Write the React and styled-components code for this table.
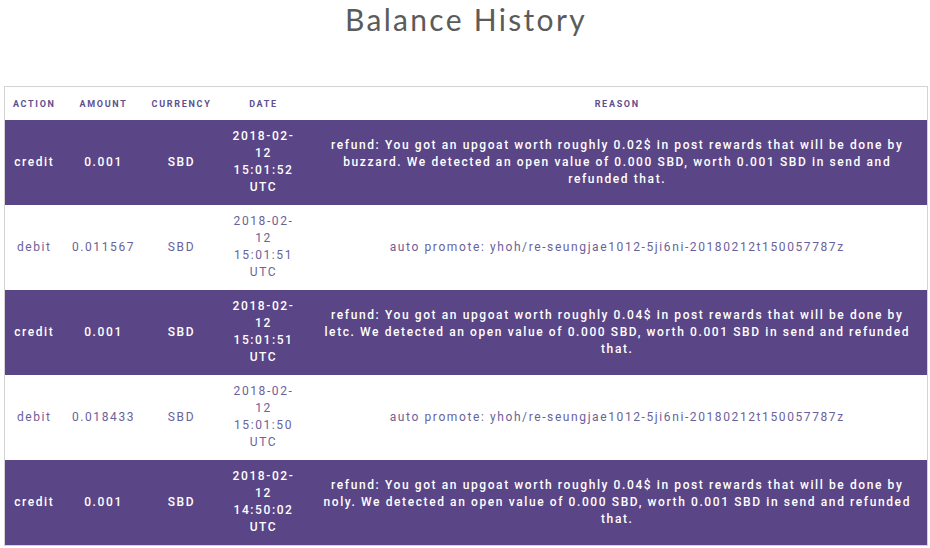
import React from "react";
import styled, { createGlobalStyle } from "styled-components";

const rows = [
  {
    action: "credit",
    amount: "0.001",
    currency: "SBD",
    date: "2018-02-12 15:01:52 UTC",
    reason:
      "refund: You got an upgoat worth roughly 0.02$ in post rewards that will be done by buzzard. We detected an open value of 0.000 SBD, worth 0.001 SBD in send and refunded that.",
  },
  {
    action: "debit",
    amount: "0.011567",
    currency: "SBD",
    date: "2018-02-12 15:01:51 UTC",
    reason: "auto promote: yhoh/re-seungjae1012-5ji6ni-20180212t150057787z",
  },
  {
    action: "credit",
    amount: "0.001",
    currency: "SBD",
    date: "2018-02-12 15:01:51 UTC",
    reason:
      "refund: You got an upgoat worth roughly 0.04$ in post rewards that will be done by letc. We detected an open value of 0.000 SBD, worth 0.001 SBD in send and refunded that.",
  },
  {
    action: "debit",
    amount: "0.018433",
    currency: "SBD",
    date: "2018-02-12 15:01:50 UTC",
    reason: "auto promote: yhoh/re-seungjae1012-5ji6ni-20180212t150057787z",
  },
  {
    action: "credit",
    amount: "0.001",
    currency: "SBD",
    date: "2018-02-12 14:50:02 UTC",
    reason:
      "refund: You got an upgoat worth roughly 0.04$ in post rewards that will be done by noly. We detected an open value of 0.000 SBD, worth 0.001 SBD in send and refunded that.",
  },
];

export default function App() {
  return (
    <Page>
      <GlobalStyle />
      <Title>Balance History</Title>
      <Table>
        <colgroup>
          <col style={{ width: 59 }} />
          <col style={{ width: 80 }} />
          <col style={{ width: 76 }} />
          <col style={{ width: 88 }} />
          <col />
        </colgroup>
        <thead>
          <tr>
            <Th>Action</Th>
            <Th>Amount</Th>
            <Th>Currency</Th>
            <Th>Date</Th>
            <Th>Reason</Th>
          </tr>
        </thead>
        <tbody>
          {rows.map((r, i) => {
            const credit = r.action === "credit";
            return (
              <Row key={i} $credit={credit}>
                <Td>{r.action}</Td>
                <Td>{r.amount}</Td>
                <Td>{r.currency}</Td>
                <DateCell>{r.date}</DateCell>
                <ReasonCell>{r.reason}</ReasonCell>
              </Row>
            );
          })}
        </tbody>
      </Table>
    </Page>
  );
}

const GlobalStyle = createGlobalStyle`
  body {
    margin: 0;
    background: #fff;
    font-family: Roboto, "Liberation Sans", sans-serif;
  }
`;

const Page = styled.div`
  width: 930px;
  padding: 0 2px 0 4px;
  box-sizing: border-box;
`;

const Title = styled.h1`
  margin: 0;
  height: 86px;
  padding-top: 1px;
  box-sizing: border-box;
  text-align: center;
  font-family: Lato, "Open Sans", sans-serif;
  font-weight: 400;
  font-size: 30px;
  letter-spacing: 2.3px;
  line-height: 36px;
  color: #5b5b5b;
`;

const Table = styled.table`
  width: 100%;
  table-layout: fixed;
  border-collapse: collapse;
  border: 1px solid #d3d3d3;
`;

const Th = styled.th`
  height: 33px;
  padding: 0;
  text-align: center;
  vertical-align: middle;
  font-size: 9px;
  font-weight: 700;
  letter-spacing: 1.7px;
  text-transform: uppercase;
  color: #5f4f8f;
`;

const Row = styled.tr`
  background: ${(p) => (p.$credit ? "#5a4586" : "#fff")};
  color: ${(p) => (p.$credit ? "#fff" : "#69629a")};
  font-weight: ${(p) => (p.$credit ? 500 : 400)};
`;

const Td = styled.td`
  padding: 8px 2px 9px;
  text-align: center;
  vertical-align: middle;
  font-size: 12px;
  line-height: 17px;
  letter-spacing: 1.6px;
`;

const DateCell = styled(Td)`
  padding-left: 10px;
  padding-right: 10px;
`;

const ReasonCell = styled(Td)`
  padding-left: 16px;
  padding-right: 16px;
`;
